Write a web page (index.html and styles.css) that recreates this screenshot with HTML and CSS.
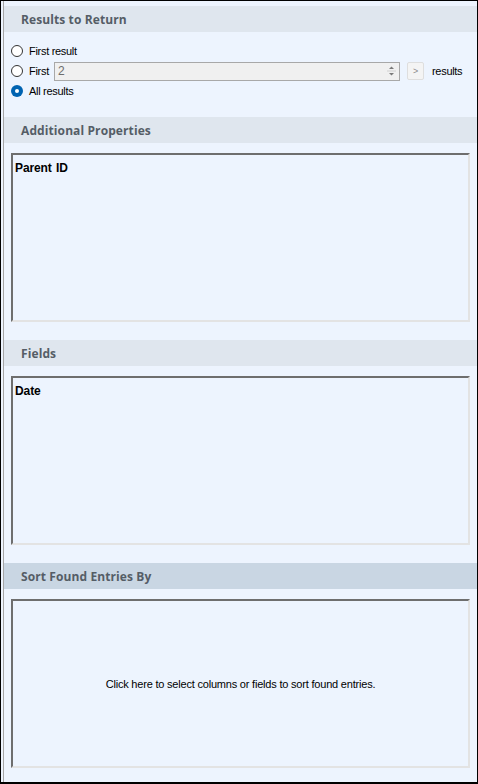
FILE: index.html
```html
<!DOCTYPE html>
<html>
<head>
<meta charset="utf-8">
<link rel="stylesheet" href="styles.css">
</head>
<body>
<div class="frame">
  <div class="panel">
    <div class="section-head">Results to Return</div>
    <div class="radios">
      <label class="radio-row">
        <svg class="radio" width="12" height="12" viewBox="0 0 12 12"><circle cx="6" cy="6" r="5.5" fill="#ffffff" stroke="#333333" stroke-width="1"/></svg>
        <span>First result</span>
      </label>
      <div class="radio-row">
        <svg class="radio" width="12" height="12" viewBox="0 0 12 12"><circle cx="6" cy="6" r="5.5" fill="#ffffff" stroke="#333333" stroke-width="1"/></svg>
        <span class="first-label">First</span>
        <div class="num-input">
          <span class="num-val">2</span>
          <div class="spin">
            <svg width="9" height="16" viewBox="0 0 9 16"><path d="M2 6 L4.5 3.5 L7 6 Z" fill="#7a7a7a"/><line x1="0" y1="8" x2="9" y2="8" stroke="#d0d0d0"/><path d="M2 10 L4.5 12.5 L7 10 Z" fill="#7a7a7a"/></svg>
          </div>
        </div>
        <div class="go-btn">&gt;</div>
        <span class="results-label">results</span>
      </div>
      <label class="radio-row">
        <svg class="radio" width="12" height="12" viewBox="0 0 12 12"><circle cx="6" cy="6" r="6" fill="#0063b1"/><circle cx="6" cy="6" r="2" fill="#ffffff"/></svg>
        <span>All results</span>
      </label>
    </div>

    <div class="section-head">Additional Properties</div>
    <div class="listbox"><div class="list-item">Parent ID</div></div>

    <div class="section-head">Fields</div>
    <div class="listbox"><div class="list-item">Date</div></div>

    <div class="section-head selected">Sort Found Entries By</div>
    <div class="listbox centered"><div class="hint">Click here to select columns or fields to sort found entries.</div></div>
  </div>
</div>
</body>
</html>
```
FILE: styles.css
```css
html, body {
  margin: 0;
  padding: 0;
  background: #ffffff;
}
.frame {
  width: 478px;
  height: 784px;
  box-sizing: border-box;
  border: 1px solid #000000;
  border-bottom-width: 2px;
  background: #edf4fe;
  padding-left: 2px;
  font-family: "Liberation Sans", Arial, sans-serif;
  font-size: 11px;
  color: #000000;
}
.panel {
  height: 100%;
  border-left: 1px solid #a5a5a5;
  padding-top: 5px;
  box-sizing: border-box;
}
.section-head {
  height: 26px;
  box-sizing: border-box;
  padding-top: 1px;
  line-height: 26px;
  background: #dfe6ee;
  padding-left: 17px;
  font-family: "Open Sans", "Noto Sans", sans-serif;
  font-weight: 700;
  font-size: 12px;
  letter-spacing: 0.1px;
  color: #555d66;
}
.section-head.selected {
  background: #c9d6e3;
}
.radios {
  padding: 9px 0 16px 7px;
  display: flex;
  flex-direction: column;
}
.radio-row {
  height: 20px;
  display: flex;
  align-items: center;
  letter-spacing: -0.3px;
}
.radio {
  flex: none;
  margin-right: 6px;
}
.first-label {
  width: 25px;
}
.num-input {
  width: 344px;
  height: 17px;
  border: 1px solid #a8a8a8;
  background: #f0f0f0;
  display: flex;
  align-items: center;
  justify-content: space-between;
  box-sizing: content-box;
}
.num-val {
  padding-left: 3px;
  color: #6d6d6d;
  font-size: 12px;
}
.spin {
  width: 16px;
  height: 17px;
  display: flex;
  align-items: center;
  justify-content: center;
}
.go-btn {
  width: 15px;
  height: 16px;
  margin-left: 7px;
  border: 1px solid #dedede;
  border-radius: 2px;
  background: #f4f4f4;
  color: #8a8a8a;
  font-size: 9px;
  display: flex;
  align-items: center;
  justify-content: center;
}
.results-label {
  margin-left: 8px;
}
.listbox {
  margin: 10px 7px 18px 7px;
  height: 169px;
  box-sizing: border-box;
  border-top: 2px solid #6e6e6e;
  border-left: 2px solid #6e6e6e;
  border-right: 2px solid #e3e3e3;
  border-bottom: 2px solid #e3e3e3;
  background: #edf4fe;
}
.list-item {
  padding: 6px 0 0 2px;
  font-weight: 700;
  font-size: 12px;
  letter-spacing: -0.1px;
  word-spacing: 1px;
}
.listbox.centered {
  display: flex;
  align-items: center;
  justify-content: center;
  margin-bottom: 0;
}
.hint {
  letter-spacing: -0.2px;
}
```
